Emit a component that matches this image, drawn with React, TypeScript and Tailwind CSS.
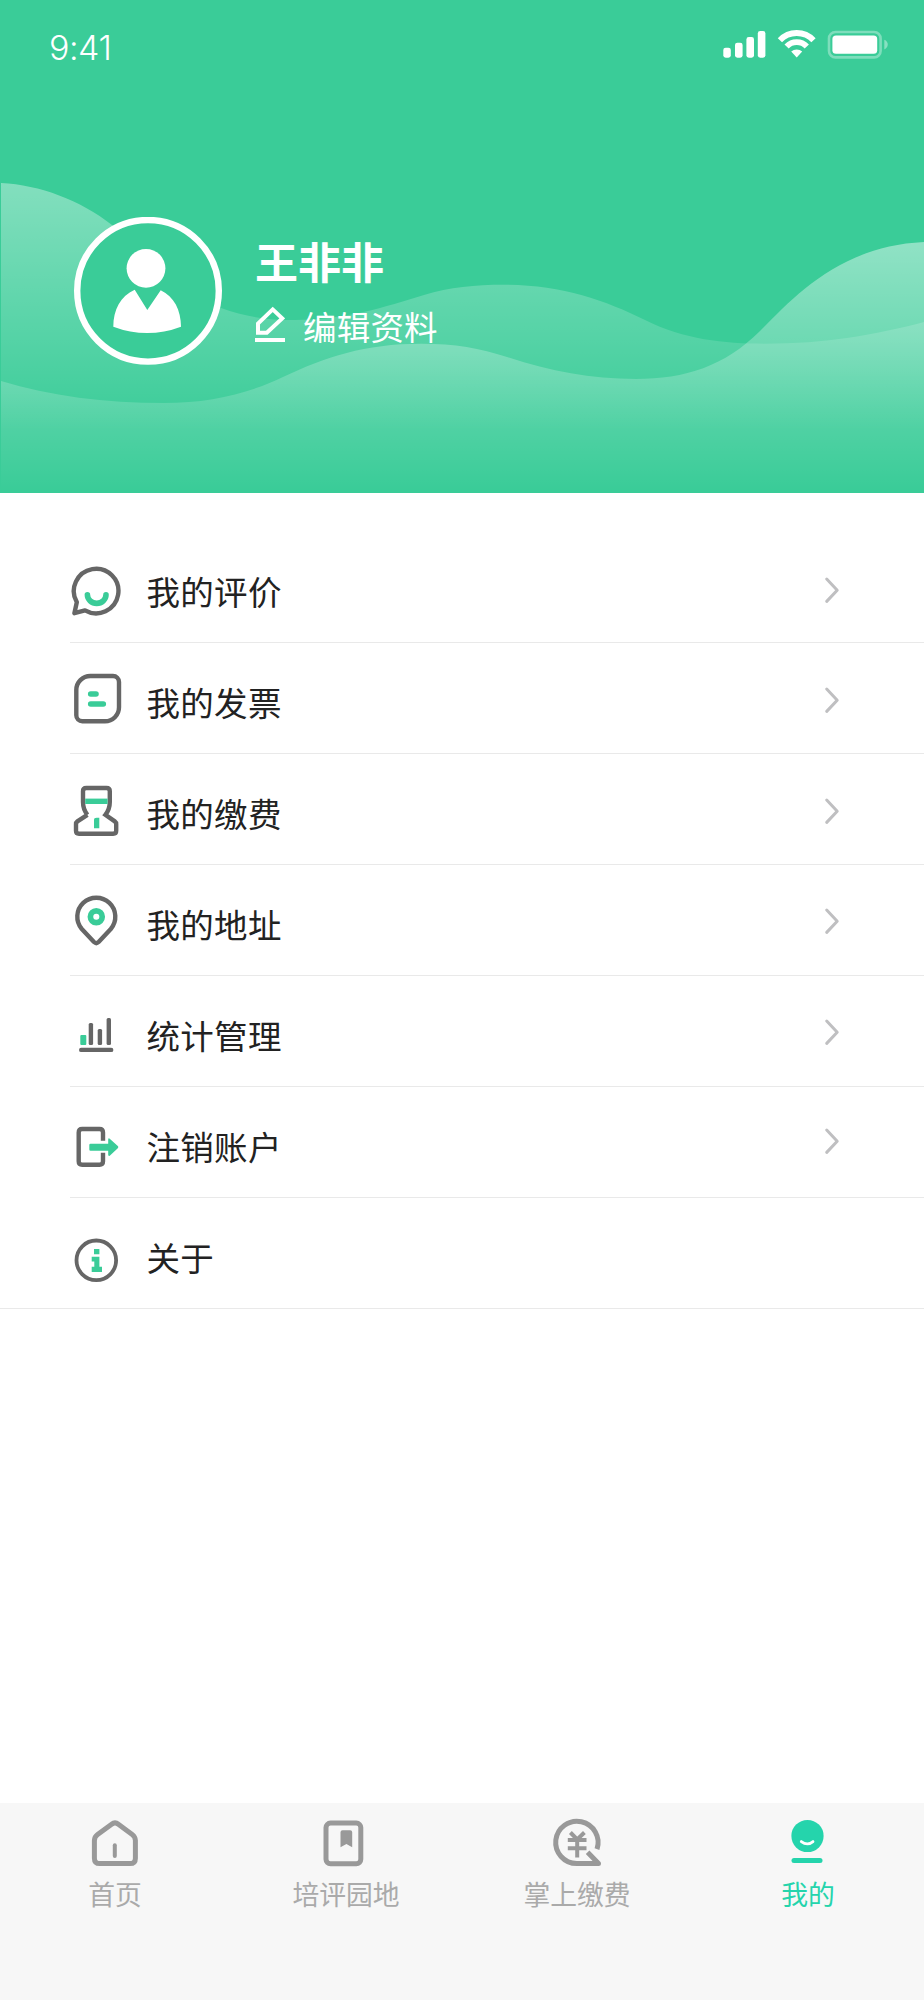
import type { ReactNode } from "react";
import clsx from "clsx";

const GREEN = "#3acc98";
const GRAY = "#666666";

function StatusIcons() {
  return (
    <svg width="170" height="36" viewBox="0 0 170 36" fill="#fff">
      <rect x="3.3" y="21.7" width="7.5" height="10" rx="2.4" />
      <rect x="15" y="16.7" width="7.6" height="15" rx="2.4" />
      <rect x="26.4" y="11" width="7.6" height="20.7" rx="2.4" />
      <rect x="37.8" y="5" width="7.6" height="26.7" rx="2.4" />
      <g fill="none" stroke="#fff" strokeWidth="5.8">
        <path d="M59.9 14.3A23 23 0 0 1 93.5 14.3" />
        <path d="M66.6 20.5A13.9 13.9 0 0 1 86.8 20.5" />
      </g>
      <path d="M71.2 25.6a8 8 0 0 1 11 0l-5.5 6z" />
      <rect x="109" y="6" width="51.6" height="25.4" rx="6.5" fill="none" stroke="#fff" strokeOpacity="0.35" strokeWidth="2.6" />
      <rect x="112.4" y="9.4" width="44.8" height="18.4" rx="3.6" />
      <path d="M164.3 13.8c4.6 1.8 4.6 7.8 0 9.6z" fillOpacity="0.4" />
    </svg>
  );
}

function Waves() {
  return (
    <svg className="absolute inset-0" width="924" height="493" viewBox="0 0 924 493">
      <defs>
        <linearGradient id="back" gradientUnits="userSpaceOnUse" x1="0" y1="183" x2="0" y2="430">
          <stop offset="0" stopColor="#fff" stopOpacity="0.37" />
          <stop offset="1" stopColor="#fff" stopOpacity="0" />
        </linearGradient>
        <linearGradient id="front" gradientUnits="userSpaceOnUse" x1="0" y1="242" x2="0" y2="490">
          <stop offset="0" stopColor="#fff" stopOpacity="0.44" />
          <stop offset="1" stopColor="#fff" stopOpacity="0" />
        </linearGradient>
      </defs>
      <path
        d="M1 183C40 185 80 200 112 225C150 255 185 295 221 308C245 317 268 320 295 320C345 320 385 307 424 295C450 287 475 284.7 504 284.7C560 284.7 605 300 645 320C685 340 725 343.7 766 343.7C825 343.7 875 335 924 322V493H1Z"
        fill="url(#back)"
      />
      <path
        d="M1 381C50 396 105 403 164 403C210 403 250 393 283 377C325 357 365 343.7 421 343.7C455 343.7 480 348 507 357C550 371 590 379 636 379C685 379 725 366 760 331C795 296 840 246 924 242V493H1Z"
        fill="url(#front)"
      />
    </svg>
  );
}

function Avatar() {
  return (
    <svg width="148" height="148" viewBox="0 0 148 148">
      <circle cx="74" cy="73.8" r="70.8" fill={GREEN} stroke="#fff" strokeWidth="6.4" />
      <circle cx="72" cy="51.3" r="19.4" fill="#fff" />
      <path d="M60.7 72.7L73.3 93L86.7 73.2C100 79.5 107 93 107 109.7Q73.3 122.5 39.3 109.7C39.3 93 46.5 79 60.7 72.7Z" fill="#fff" />
    </svg>
  );
}

function EditIcon() {
  return (
    <svg width="30" height="36" viewBox="0 0 30 36" fill="none" stroke="#fff" strokeWidth="4" className="mt-[1px]">
      <path d="M17.7 3.4L27.2 12.4L11.8 26.7H3V17.6Z" />
      <path d="M0 34H30" />
    </svg>
  );
}

function MenuIcon({ children }: { children: ReactNode }) {
  return (
    <svg width="54" height="60" viewBox="0 0 54 60" fill="none" stroke={GRAY} strokeWidth="4.4" strokeLinejoin="round" className="shrink-0">
      {children}
    </svg>
  );
}

const menu = [
  {
    label: "我的评价",
    chevron: "mt-[6px]",
    icon: (
      <MenuIcon>
        <path d="M6.8 45.2A22.3 22.3 0 1 1 15 53.4L4.4 56.2Z" />
        <path d="M17.4 37.8a9.3 8.6 0 0 0 18.6 0" stroke={GREEN} strokeWidth="5.6" strokeLinecap="round" />
      </MenuIcon>
    ),
  },
  {
    label: "我的发票",
    chevron: "mt-[3px]",
    icon: (
      <MenuIcon>
        <path d="M20.3 8H43A6 6 0 0 1 49 14V39.3A14 14 0 0 1 35 53.3H12.3A6 6 0 0 1 6.3 47.3V22A14 14 0 0 1 20.3 8Z" />
        <path d="M20.7 26H26M20.7 36H33.3" stroke={GREEN} strokeWidth="5.6" strokeLinecap="round" />
      </MenuIcon>
    ),
  },
  {
    label: "我的缴费",
    chevron: "mt-[3px]",
    icon: (
      <MenuIcon>
        <path
          d="M17.4 35.8C14 31.5 13 28 13 23V12.3Q13 9 16.3 9H36.5Q39.8 9 39.8 12.3V23C39.8 28 38.8 31.5 35.4 35.8L44.8 42.4Q46.2 43.4 46.2 45.3V51.7Q46.2 54.7 43.2 54.7H9Q6 54.7 6 51.7V45.3Q6 43.4 7.4 42.4L17.4 35.8"
          strokeLinejoin="miter"
        />
        <path d="M15.2 22.3H37.6" stroke={GREEN} strokeWidth="5.4" />
        <path d="M24 49.3V41Q24 38.7 26.6 38.7H29.3V49.3Z" fill={GREEN} stroke="none" />
      </MenuIcon>
    ),
  },
  {
    label: "我的地址",
    chevron: "mt-[2px]",
    icon: (
      <MenuIcon>
        <path d="M11.8 39A19 19 0 1 1 40.8 39L28.6 52Q26.3 54.2 24 52Z" />
        <circle cx="26.3" cy="26.7" r="5.9" stroke={GREEN} strokeWidth="5.7" />
      </MenuIcon>
    ),
  },
  {
    label: "统计管理",
    chevron: "mt-[1px]",
    icon: (
      <MenuIcon>
        <g stroke="none" fill={GRAY}>
          <rect x="10.3" y="34" width="6" height="10" rx="1" fill={GREEN} />
          <rect x="18.7" y="22" width="4.4" height="22" rx="1.5" />
          <rect x="27.7" y="28" width="4.4" height="16" rx="1.5" />
          <rect x="36.6" y="17" width="4.4" height="27" rx="1.5" />
          <rect x="9" y="46.7" width="34.4" height="4.4" rx="2.2" />
        </g>
      </MenuIcon>
    ),
  },
  {
    label: "注销账户",
    chevron: "-mt-[2px]",
    icon: (
      <MenuIcon>
        <path d="M33 28.7V20.5Q33 17 29.5 17H12.2Q8.7 17 8.7 20.5V49.2Q8.7 52.7 12.2 52.7H29.5Q33 52.7 33 49.2V40.7" />
        <path d="M20.5 31.7H38.2V27.5Q38.4 25.6 40 26.9L47.8 34Q49 35.1 47.8 36.3L40 43.4Q38.4 44.7 38.2 42.8V38.7H20.5Q19.3 38.7 19.3 37.5V32.9Q19.3 31.7 20.5 31.7Z" fill={GREEN} stroke="none" />
      </MenuIcon>
    ),
  },
  {
    label: "关于",
    chevron: null,
    icon: (
      <MenuIcon>
        <circle cx="26.3" cy="37.3" r="19.8" strokeWidth="3.8" />
        <path d="M24 26H29.4V31.3H24ZM21.7 33.7H29.4V43.7H32V49H21.7V43.7H24.3V38.6H21.7Z" fill={GREEN} stroke="none" />
      </MenuIcon>
    ),
  },
];

const tabs = [
  {
    label: "首页",
    icon: (
      <>
        <path d="M26.6 11.2Q30 8.4 33.4 11.2L47.2 21.4Q50.4 23.8 50.4 27.6V45.2Q50.4 50.6 45 50.6H14.8Q9.4 50.6 9.4 45.2V27.6Q9.4 23.8 12.6 21.4Z" />
        <path d="M29.8 32.3V43" strokeWidth="4" strokeLinecap="round" />
      </>
    ),
  },
  {
    label: "培评园地",
    icon: (
      <>
        <rect x="10" y="10.1" width="34.8" height="40.6" rx="4.5" />
        <path d="M24.5 34.3V19.3Q24.5 17.3 26.5 17.3H34.2Q36.2 17.3 36.2 19.3V34.3L30.4 31Z" fill="#999" stroke="none" />
      </>
    ),
  },
  {
    label: "掌上缴费",
    icon: (
      <>
        <path d="M50 36.1A21.2 21.2 0 1 0 29.8 50.6H51.5L40.6 39.3" strokeLinejoin="round" />
        <path d="M23.4 19.5L30.2 26.4L37.4 19.5M20.8 27H39.5M20.8 35.2H39.5M30.2 26.4V44.6" strokeWidth="4" />
      </>
    ),
  },
  {
    label: "我的",
    active: true,
    icon: (
      <>
        <circle cx="29.5" cy="23" r="16.1" fill="#25d4ac" stroke="none" />
        <path d="M23.3 28.6Q29.5 33.2 35 28.6" stroke="#fff" strokeWidth="2.8" strokeLinecap="round" />
        <path d="M16 47.5H42" strokeLinecap="round" />
      </>
    ),
  },
];

export default function App() {
  return (
    <div className="flex h-[2000px] w-[924px] flex-col bg-white font-['Noto_Sans_CJK_SC',sans-serif] font-normal">
      <header className="relative h-[493px] shrink-0 bg-[#3acc98] text-white">
        <Waves />
        <div className="relative flex items-start justify-between pt-[26px] pr-[34px] pl-[49px]">
          <span className="mt-[1px] font-[Inter,sans-serif] text-[34px] leading-[42px] font-light tracking-[-0.5px]">9:41</span>
          <StatusIcons />
        </div>
        <div className="relative mt-[148px] flex pl-[74px]">
          <Avatar />
          <div className="ml-[33px] pt-[19px]">
            <h1 className="text-[43px] leading-[48px] font-bold">王非非</h1>
            <div className="mt-[21px] flex items-start">
              <EditIcon />
              <span className="mt-[1px] ml-[18px] text-[33.5px] leading-[40px] tracking-[0.2px]">编辑资料</span>
            </div>
          </div>
        </div>
      </header>

      <ul className="pt-[39px]">
        {menu.map((item, i) => (
          <li key={item.label} className={clsx(i === menu.length - 1 && "border-b border-[#e9e9e9]")}>
            <a
              className={clsx(
                "ml-[70px] flex items-center",
                i === menu.length - 1 ? "h-[110px]" : "h-[111px] border-b border-[#e9e9e9]"
              )}
            >
              {item.icon}
              <span className="mt-[8px] ml-[22.5px] text-[33.5px] leading-[40px] tracking-[0.3px] text-[#222]">{item.label}</span>
              {item.chevron && (
                <svg
                  width="16"
                  height="28"
                  viewBox="0 0 16 28"
                  fill="none"
                  stroke="#bfbfc1"
                  strokeWidth="3"
                  strokeLinecap="round"
                  strokeLinejoin="round"
                  className={clsx("mr-[84.5px] ml-auto", item.chevron)}
                >
                  <path d="M2.7 3L13.2 14.2L2.7 25.4" />
                </svg>
              )}
            </a>
          </li>
        ))}
      </ul>

      <nav className="mt-auto grid h-[197px] shrink-0 grid-cols-4 bg-[#f7f7f7]">
        {tabs.map((tab) => (
          <a key={tab.label} className={clsx("flex flex-col items-center pt-[10px] pr-px", tab.active ? "text-[#25d4ac]" : "text-[#aaa]")}>
            <svg width="60" height="60" viewBox="0 0 60 60" fill="none" stroke={tab.active ? "#25d4ac" : "#999"} strokeWidth="5">
              {tab.icon}
            </svg>
            <span className="mt-[3px] text-[26.8px] leading-[36px]">{tab.label}</span>
          </a>
        ))}
      </nav>
    </div>
  );
}
